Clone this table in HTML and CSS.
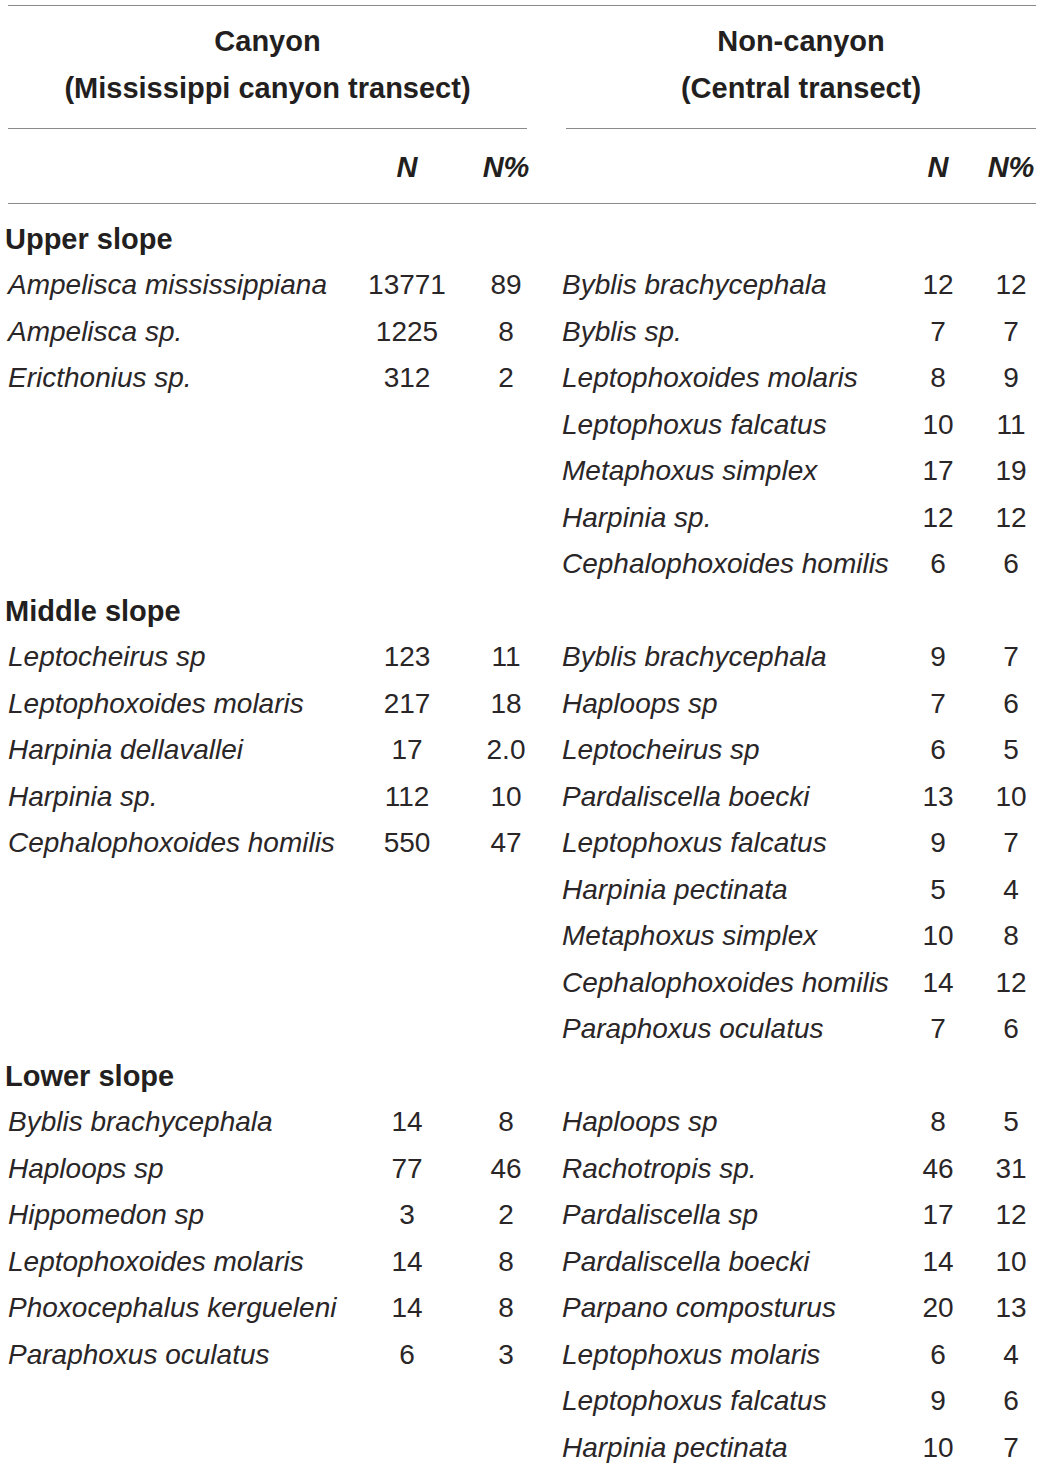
FILE: index.html
```html
<!DOCTYPE html>
<html lang="en">
<head>
<meta charset="utf-8">
<title>Amphipod species table</title>
<link rel="stylesheet" href="styles.css">
</head>
<body>
<div class="table">
  <div class="rule"></div>
  <div class="groups">
    <div class="group canyon">
      <div>Canyon</div>
      <div>(Mississippi canyon transect)</div>
    </div>
    <div class="group noncanyon">
      <div>Non-canyon</div>
      <div>(Central transect)</div>
    </div>
  </div>
  <div class="grid colhead">
    <span></span><span class="num hd">N</span><span class="num hd">N%</span>
    <span class="sp2"></span><span class="num hd">N</span><span class="num hd">N%</span>
  </div>
  <div class="grid body">
    <span class="section">Upper slope</span>

    <span class="sp">Ampelisca mississippiana</span><span class="num">13771</span><span class="num">89</span>
    <span class="sp sp2">Byblis brachycephala</span><span class="num">12</span><span class="num">12</span>

    <span class="sp">Ampelisca sp.</span><span class="num">1225</span><span class="num">8</span>
    <span class="sp sp2">Byblis sp.</span><span class="num">7</span><span class="num">7</span>

    <span class="sp">Ericthonius sp.</span><span class="num">312</span><span class="num">2</span>
    <span class="sp sp2">Leptophoxoides molaris</span><span class="num">8</span><span class="num">9</span>

    <span></span><span></span><span></span>
    <span class="sp sp2">Leptophoxus falcatus</span><span class="num">10</span><span class="num">11</span>

    <span></span><span></span><span></span>
    <span class="sp sp2">Metaphoxus simplex</span><span class="num">17</span><span class="num">19</span>

    <span></span><span></span><span></span>
    <span class="sp sp2">Harpinia sp.</span><span class="num">12</span><span class="num">12</span>

    <span></span><span></span><span></span>
    <span class="sp sp2">Cephalophoxoides homilis</span><span class="num">6</span><span class="num">6</span>

    <span class="section">Middle slope</span>

    <span class="sp">Leptocheirus sp</span><span class="num">123</span><span class="num">11</span>
    <span class="sp sp2">Byblis brachycephala</span><span class="num">9</span><span class="num">7</span>

    <span class="sp">Leptophoxoides molaris</span><span class="num">217</span><span class="num">18</span>
    <span class="sp sp2">Haploops sp</span><span class="num">7</span><span class="num">6</span>

    <span class="sp">Harpinia dellavallei</span><span class="num">17</span><span class="num">2.0</span>
    <span class="sp sp2">Leptocheirus sp</span><span class="num">6</span><span class="num">5</span>

    <span class="sp">Harpinia sp.</span><span class="num">112</span><span class="num">10</span>
    <span class="sp sp2">Pardaliscella boecki</span><span class="num">13</span><span class="num">10</span>

    <span class="sp">Cephalophoxoides homilis</span><span class="num">550</span><span class="num">47</span>
    <span class="sp sp2">Leptophoxus falcatus</span><span class="num">9</span><span class="num">7</span>

    <span></span><span></span><span></span>
    <span class="sp sp2">Harpinia pectinata</span><span class="num">5</span><span class="num">4</span>

    <span></span><span></span><span></span>
    <span class="sp sp2">Metaphoxus simplex</span><span class="num">10</span><span class="num">8</span>

    <span></span><span></span><span></span>
    <span class="sp sp2">Cephalophoxoides homilis</span><span class="num">14</span><span class="num">12</span>

    <span></span><span></span><span></span>
    <span class="sp sp2">Paraphoxus oculatus</span><span class="num">7</span><span class="num">6</span>

    <span class="section">Lower slope</span>

    <span class="sp">Byblis brachycephala</span><span class="num">14</span><span class="num">8</span>
    <span class="sp sp2">Haploops sp</span><span class="num">8</span><span class="num">5</span>

    <span class="sp">Haploops sp</span><span class="num">77</span><span class="num">46</span>
    <span class="sp sp2">Rachotropis sp.</span><span class="num">46</span><span class="num">31</span>

    <span class="sp">Hippomedon sp</span><span class="num">3</span><span class="num">2</span>
    <span class="sp sp2">Pardaliscella sp</span><span class="num">17</span><span class="num">12</span>

    <span class="sp">Leptophoxoides molaris</span><span class="num">14</span><span class="num">8</span>
    <span class="sp sp2">Pardaliscella boecki</span><span class="num">14</span><span class="num">10</span>

    <span class="sp">Phoxocephalus kergueleni</span><span class="num">14</span><span class="num">8</span>
    <span class="sp sp2">Parpano composturus</span><span class="num">20</span><span class="num">13</span>

    <span class="sp">Paraphoxus oculatus</span><span class="num">6</span><span class="num">3</span>
    <span class="sp sp2">Leptophoxus molaris</span><span class="num">6</span><span class="num">4</span>

    <span></span><span></span><span></span>
    <span class="sp sp2">Leptophoxus falcatus</span><span class="num">9</span><span class="num">6</span>

    <span></span><span></span><span></span>
    <span class="sp sp2">Harpinia pectinata</span><span class="num">10</span><span class="num">7</span>
  </div>
</div>
</body>
</html>
```

FILE: styles.css
```css
html, body {
  margin: 0;
  padding: 0;
  background: #ffffff;
  overflow: hidden;
}

.table {
  font-family: "Liberation Sans", Arial, Helvetica, sans-serif;
  font-size: 28px;
  color: #2a2627;
  padding-top: 5px;
}

.rule {
  margin-left: 8px;
  width: 1028px;
  border-top: 1px solid #8a8a8a;
}

.groups {
  display: flex;
  padding-left: 8px;
}

.group {
  font-weight: bold;
  font-size: 29px;
  line-height: 47px;
  text-align: center;
  color: #231f20;
  padding-top: 11.5px;
  padding-bottom: 16px;
  border-bottom: 1px solid #8a8a8a;
}

.canyon {
  width: 519px;
}

.noncanyon {
  width: 470px;
  margin-left: 39px;
}

.grid {
  display: grid;
  grid-template-columns: 350px 98px 100px 339px 86px 60px;
  margin-left: 8px;
  width: 1028px;
}

.colhead {
  padding-top: 15px;
  padding-bottom: 12.5px;
  border-bottom: 1px solid #8a8a8a;
  line-height: 47px;
}

.body {
  padding-top: 11.75px;
  grid-auto-rows: 46.5px;
  line-height: 46.5px;
}

.section {
  grid-column: 1 / -1;
  font-weight: bold;
  font-size: 29px;
  color: #231f20;
  margin-left: -3px;
}

.sp {
  font-style: italic;
  white-space: nowrap;
}

.sp2 {
  padding-left: 6px;
}

.num {
  text-align: center;
  white-space: nowrap;
}

.hd {
  font-weight: bold;
  font-style: italic;
  font-size: 29px;
  color: #231f20;
}
```
